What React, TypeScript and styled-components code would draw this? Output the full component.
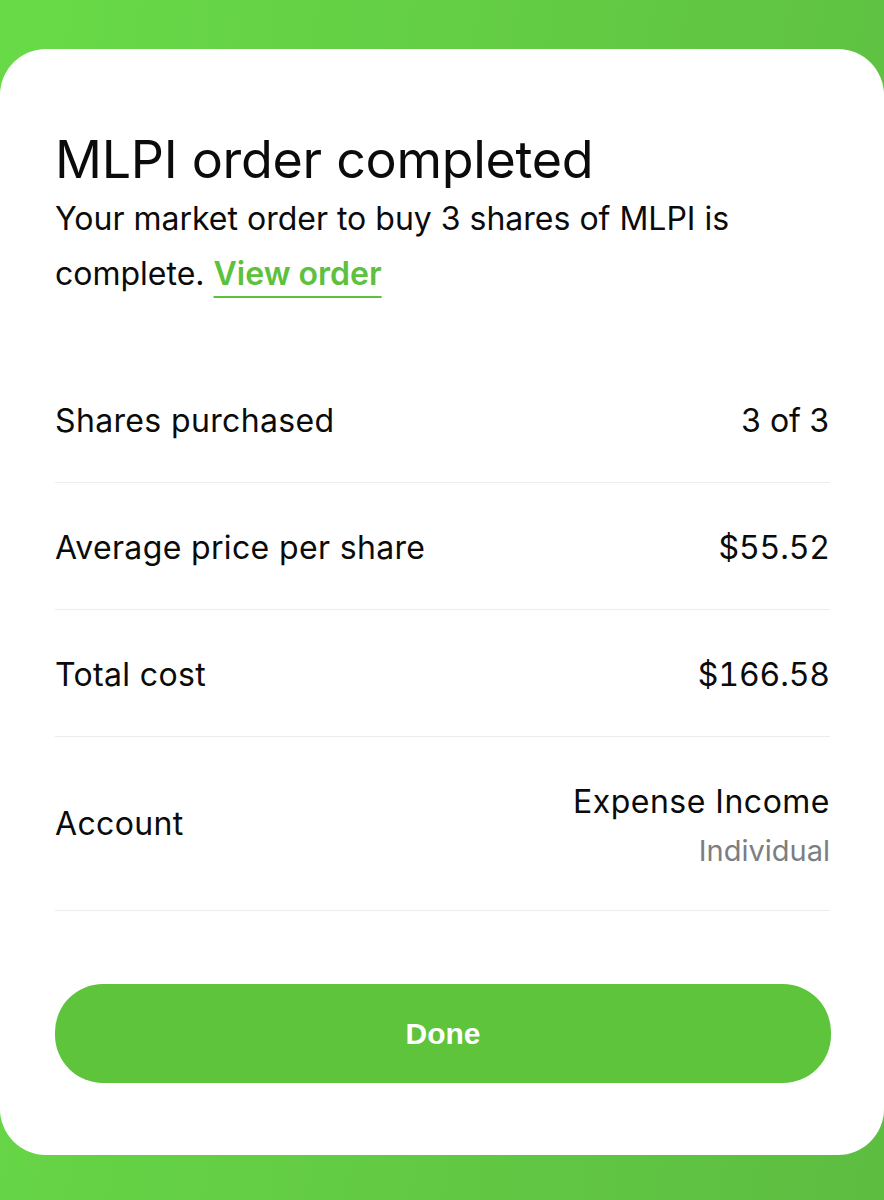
import styled, { createGlobalStyle } from 'styled-components';

const GlobalStyle = createGlobalStyle`
  html, body {
    margin: 0;
    padding: 0;
    background: #5fc941;
  }
  * {
    box-sizing: border-box;
  }
`;

const rows = [
  { label: 'Shares purchased', value: '3 of 3' },
  { label: 'Average price per share', value: '$55.52' },
  { label: 'Total cost', value: '$166.58' },
];

export default function App() {
  return (
    <>
      <GlobalStyle />
      <Screen>
        <Card>
          <Title>MLPI order completed</Title>
          <Message>
            Your market order to buy 3 shares of MLPI is complete.{' '}
            <ViewLink>View order</ViewLink>
          </Message>

          <Details>
            {rows.map(row => (
              <Row key={row.label}>
                <Label>{row.label}</Label>
                <Value>{row.value}</Value>
              </Row>
            ))}
            <Row tall>
              <Label>Account</Label>
              <ValueStack>
                <AccountName>Expense Income</AccountName>
                <SubValue>Individual</SubValue>
              </ValueStack>
            </Row>
          </Details>

          <DoneButton>Done</DoneButton>
        </Card>
      </Screen>
    </>
  );
}

const Screen = styled.div`
  width: 884px;
  height: 1200px;
  padding-top: 49px;
  background: linear-gradient(100deg, #68da47 0%, #5dbd41 100%);
  font-family: Inter, 'Noto Sans', sans-serif;
  color: #0b0b0b;
  overflow: hidden;
`;

const Card = styled.div`
  width: 884px;
  height: 1106px;
  background: #fff;
  border-radius: 46px;
  padding: 80px 54px 0 55px;
  display: flex;
  flex-direction: column;
`;

const Title = styled.h1`
  margin: 0;
  font-size: 52px;
  font-weight: 400;
  line-height: 62px;
  letter-spacing: -0.3px;
`;

const Message = styled.p`
  margin: 0;
  font-size: 32px;
  line-height: 55px;
  font-weight: 400;
  width: 720px;
`;

const ViewLink = styled.a`
  color: #5cc13d;
  font-weight: 600;
  text-decoration: underline;
  text-decoration-thickness: 2px;
  text-underline-offset: 11px;
`;

const Details = styled.div`
  margin-top: 55px;
  display: flex;
  flex-direction: column;
`;

const Row = styled.div<{ tall?: boolean }>`
  display: flex;
  justify-content: space-between;
  align-items: center;
  height: ${props => (props.tall ? 174 : 127)}px;
  border-bottom: 1px solid #ececec;
  padding-top: ${props => (props.tall ? 0 : 2)}px;
`;

const Label = styled.span`
  font-size: 32px;
  letter-spacing: 0.35px;
`;

const Value = styled.span`
  font-size: 32px;
  letter-spacing: -0.1px;
  font-variant-numeric: tabular-nums;
`;

const AccountName = styled.span`
  font-size: 32px;
  letter-spacing: 0.5px;
`;

const ValueStack = styled.div`
  display: flex;
  flex-direction: column;
  align-items: flex-end;
  gap: 12px;
  margin-top: 2px;
`;

const SubValue = styled.span`
  font-size: 29px;
  color: #7b7e83;
`;

const DoneButton = styled.button`
  margin-top: 73px;
  height: 99px;
  width: 776px;
  border: none;
  border-radius: 48px;
  background: #5dc43c;
  color: #fff;
  font-family: 'Liberation Sans', Arial, sans-serif;
  font-size: 30px;
  font-weight: 700;
`;
